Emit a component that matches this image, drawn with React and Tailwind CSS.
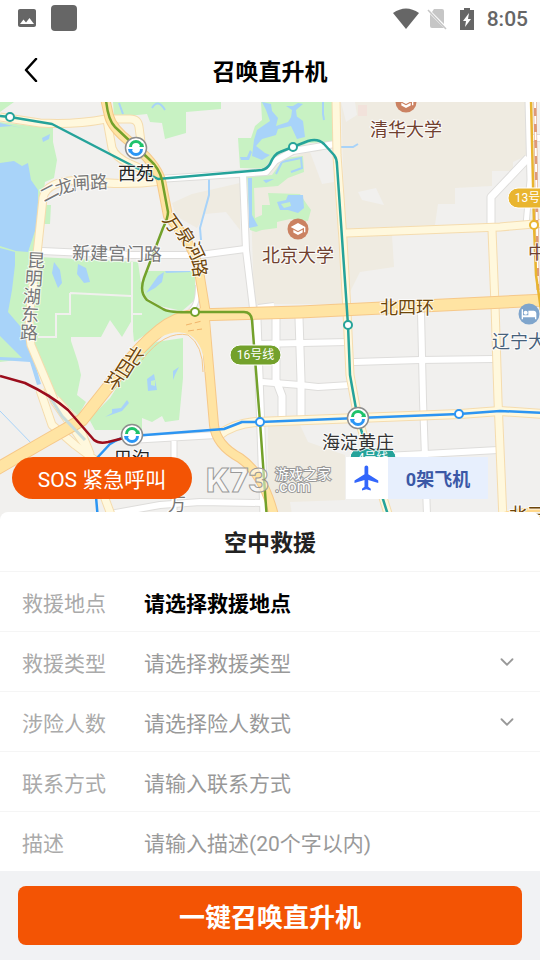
import { ChevronDown } from 'lucide-react';
import { MdImage, MdFlight, MdSchool, MdHotel } from 'react-icons/md';

// Roads are drawn twice: a darker casing first, then the fill on top
const whiteRoads = [
  { d: 'M158 179 L266 172 L275 161 L293 151 L335 144', w: 6 },
  { d: 'M243 175 L246 250 L253 308', w: 6 },
  { d: 'M42 251 L130 255 L200 255 L245 249', w: 6 },
  { d: 'M190 311 Q198 306 198 285', w: 4 },
  { d: 'M276 318 V380 L282 396 V418', w: 7 },
  { d: 'M299 318 L301 380 V418', w: 7 },
  { d: 'M256 344 L348 342', w: 6 },
  { d: 'M258 307 L274 305', w: 4 },
  { d: 'M262 382 L300 385 L318 387 L350 385', w: 6 },
  { d: 'M354 362 L420 360 L494 359', w: 6 },
  { d: 'M421 312 L423 400 L427 515', w: 6 },
  { d: 'M384 456 L425 454 L498 450', w: 6 },
  { d: 'M491 226 V197 L528 158', w: 7 },
  { d: 'M528 100 L530 180 L526 225', w: 5 },
  { d: 'M533 138 H545', w: 6 },
  { d: 'M257 320 L264 515', w: 7 },
  { d: 'M130 440 L216 435', w: 6 },
  { d: 'M174 441 V515', w: 5 },
  { d: 'M110 514 L160 505 L200 502 L262 503', w: 6 },
];

const paleRoads = [
  { d: 'M0 117 L40 123 Q75 125 106 119 L130 119 Q138 119 139 127 L141 142', w: 7 },
  { d: 'M107 120 L112 148 Q115 157 130 164 L160 177', w: 7 },
  { d: 'M162 181 Q120 186 90 181 Q47 178 43 198 L38 245 L30 310 Q28 330 31 345 L55 402 L85 445 L113 520', w: 7 },
  { d: 'M40 390 L52 425 L75 445 L95 460', w: 7 },
  { d: 'M56 400 L78 425 L90 455', w: 8 },
  { d: 'M336 100 L337 155 L343 240 L347 312 L350 375 L358 418 L390 520', w: 7 },
  { d: 'M346 233 L500 227 L545 223', w: 7 },
  { d: 'M492 230 L495 305 L498 400 L503 520', w: 7 },
  { d: 'M218 436 Q232 424 256 422 L358 418 L460 414 L500 411 L545 414', w: 8 },
];

const majorRoads = [
  { d: 'M105 98 L109 116 Q112 128 130 142 Q155 162 161 180 L168 216 Q190 240 198 265 L207 320', w: 8 },
  { d: 'M204 308 L208 355 L214 425 Q216 445 240 458 Q265 475 275 520', w: 8 },
  { d: 'M-5 470 L45 441 L82 420 L120 372 Q140 346 160 330 Q175 318 195 315 L300 312 L545 300', w: 11 },
];

const lines = [
  { d: 'M0 116 L10 117 L52 124 L158 179 L262 170 Q267 169 270 164 Q274 154 280 152 L308 141 Q318 138 324 144 L334 155 Q337 159 337 165 L348 325 L350 375 L358 420 L388 515', c: '#25a39a' },
  { d: 'M106 100 Q108 120 115 127 L150 160 Q159 168 162 180 L168 212 Q168 218 163 228 L144 278 Q139 292 147 300 L163 309 Q168 313 195 312 L244 312 Q251 312 252 320 L260 422 L267 520', c: '#73a12b' },
  { d: 'M98 520 L95 485 L97 458 L110 444 Q118 438 132 436 L224 429 L242 422 L260 422 L358 418 L459 414 L500 411 L545 413', c: '#2c95f2' },
  { d: 'M0 376 L25 383 Q52 396 68 410 L94 440 Q99 444 108 442 L132 436', c: '#9b0d1c' },
  { d: 'M531 100 L534 225 L536 275 L541 310', c: '#e9b52f' },
];

const stops = [
  { x: 10, y: 117, c: '#25a39a' },
  { x: 293, y: 147, c: '#25a39a' },
  { x: 348, y: 325, c: '#25a39a' },
  { x: 195, y: 312, c: '#73a12b' },
  { x: 260, y: 422, c: '#2c95f2' },
  { x: 459, y: 414, c: '#2c95f2' },
  { x: 534, y: 225, c: '#e9b52f' },
];

const interchanges = [
  { x: 136, y: 148 },
  { x: 132, y: 435 },
  { x: 358, y: 418 },
];

const labels = [
  { t: '西苑', x: 136, y: 180, c: '#222' },
  { t: '巴沟', x: 132, y: 465, c: '#222' },
  { t: '海淀黄庄', x: 358, y: 449, c: '#333' },
  { t: '清华大学', x: 406, y: 136, c: '#70402f' },
  { t: '北京大学', x: 298, y: 262, c: '#70402f' },
  { t: '中', x: 537, y: 259, c: '#70402f' },
  { t: '辽宁大', x: 519, y: 348, c: '#46607a' },
  { t: '北四环', x: 407, y: 314, c: '#6d4509' },
  { t: '北三', x: 527, y: 521, c: '#6d4509' },
  { t: '新建宫门路', x: 117, y: 260, c: '#777', r: 1 },
  { t: '闸路', x: 90, y: 189, c: '#777', r: -3 },
  { t: '龙', x: 64, y: 193, c: '#777', r: -20 },
  { t: '二', x: 49, y: 199, c: '#777', r: -28 },
  { t: '昆', x: 36, y: 267, c: '#777', r: 3 },
  { t: '明', x: 34, y: 285, c: '#777', r: 4 },
  { t: '湖', x: 32, y: 303, c: '#777', r: 4 },
  { t: '东', x: 30, y: 321, c: '#777', r: 3 },
  { t: '路', x: 29, y: 339, c: '#777', r: 2 },
  { t: '万', x: 173, y: 230, c: '#6d4509', r: 55 },
  { t: '泉', x: 186, y: 243, c: '#6d4509', r: 58 },
  { t: '河', x: 196, y: 258, c: '#6d4509', r: 65 },
  { t: '路', x: 200, y: 275, c: '#6d4509', r: 82 },
  { t: '北', x: 135, y: 362, c: '#6d4509', r: 32 },
  { t: '四', x: 125, y: 375, c: '#6d4509', r: 32 },
  { t: '环', x: 114, y: 388, c: '#6d4509', r: 32 },
  { t: '万', x: 177, y: 511, c: '#777' },
];

function Roads({ items, edge, fill }) {
  return (
    <g fill="none" strokeLinejoin="round">
      {items.map((r) => (
        <path key={`e${r.d}`} d={r.d} stroke={edge} strokeWidth={r.w + 2} />
      ))}
      {items.map((r) => (
        <path key={r.d} d={r.d} stroke={fill} strokeWidth={r.w} />
      ))}
    </g>
  );
}

function LineBadge({ x, y, w, color, children }) {
  return (
    <g>
      <rect x={x} y={y} width={w} height="20" rx="10" fill={color} stroke="#fff" />
      <text x={x + w / 2} y={y + 14} fill="#fff" fontSize="12" textAnchor="middle">{children}</text>
    </g>
  );
}

function CityMap() {
  return (
    <svg
      className="absolute inset-0 size-full font-['Roboto','Noto_Sans_CJK_SC',sans-serif]"
      viewBox="0 102 540 418"
      preserveAspectRatio="xMidYMin slice"
      role="img"
      aria-label="地图"
    >
      <rect y="90" width="540" height="440" fill="#f1f0ee" />

      {/* Campuses */}
      <g fill="#efebe1">
        <path d="M341 102 H526 V156 L513 162 V171 H492 V186 L455 188 V204 H438 L435 225 L345 229Z" />
        <path d="M250 172 L318 148 L335 160 L342 304 H254Z" />
        <path d="M346 237 L392 235 L394 267 L360 272 L350 292Z" />
        <path d="M172 203 L192 194 L240 183 V230 L226 212 L205 214 L197 228 L176 216Z" />
        <path d="M268 425 H300 L308 442 L345 455 V500 L290 502 L292 515 H268Z" />
      </g>
      <path d="M341 102 H355 L357 115 L346 122Z M310 152 L332 150 L334 182 L322 184Z M358 192 L376 188 L384 205 L362 200Z" fill="#f1f0ee" />
      <path d="M358 105 H367 V116 H358Z" fill="#f2e2db" />

      {/* Parks */}
      <g fill="#c8f2c3">
        <path d="M0 102 H14 L0 112Z M0 122 L40 127 L53 128 V142 L57 160 L54 178 L45 182 L40 225 L34 252 L28 330 L33 358 L0 362Z M46 205 L51 205 L50 224 L43 224Z" />
        <path d="M113 102 H221 V109 L186 112 V133 L165 139 L162 123 L150 122 L147 114 L128 116 L114 117Z" />
        <path d="M261 102 H333 V142 L308 143 L278 156 L266 169 L240 168 L238 138 H251 L255 126 L262 120Z" />
        <path d="M247 177 L272 175 L284 158 L303 156 L304 172 L288 178 L278 186 L254 188 L255 218 L262 215 V205 H270 L268 193 L300 194 L306 203 L311 210 L308 221 L290 219 L277 222 V228 L262 230 L256 232 L250 230Z" />
        <path d="M38 257 L138 262 L143 298 L165 310 L182 311 L134 342 L132 320 L122 337 L110 320 L101 337 L71 337 V341 L78 362 L81 375 L77 395 L86 402 L78 416 L50 388 L32 345Z" />
        <path d="M146 271 H195 V300 L182 311 L160 306 L146 297 L142 285Z" />
        <path d="M136 358 L156 342 L183 338 V378 L179 420 L165 422 L162 416 L152 422 L142 418 V430 L95 430 L89 419 L110 398Z" />
      </g>
      <path d="M70 293 L131 296 M70 293 V314 H56 V337 H38 M132 262 V340 M133 314 H142" fill="none" stroke="#f1f0ee" strokeWidth="2" />

      {/* Water */}
      <g fill="#a8d3f9">
        <path d="M0 163 L14 161 L22 166 L28 163 L31 180 L38 190 V200 L37 225 L31 243 L28 252 L16 251 L0 246Z" />
        <path d="M0 248 L15 252 V265 L12 290 L8 312 L20 326 L28 342 L34 360 L41 384 L37 385 L30 362 L0 360 V357 L22 358 L0 336Z" />
        <path d="M54 262 L60 270 L62 283 L58 288 L52 273Z M78 264 L86 268 L90 282 L84 283 L77 274Z" />
        <path d="M146 293 L158 276 L164 272 L162 282 L155 288Z M165 271 H190 V272 L166 273Z" />
        <path d="M147 379 L154 374 L157 390 L148 391Z M173 371 L179 367 L175 375 L173 380Z M112 409 L121 408 L127 400 L129 403 L122 411 L105 417 L112 413Z" />
        <path d="M42 138 L50 134 L49 139 L43 142Z M0 123 L27 129 L12 126 L0 127Z" />
        <path d="M262 102 L271 104 L272 111 L278 118 L276 126 L288 122 L293 114 L299 118 L303 121 L305 137 L297 139 L291 126 L278 129 L276 135 L262 139 L256 146 L265 153 L270 155 L262 160 L252 156 L254 140 L257 130 L270 121 L266 110Z" />
        <path d="M286 106 H293 L298 103 L303 104 L296 110 L297 118 L291 118 L292 110Z M240 157 H247 L250 150 L252 152 L249 160 H241Z" />
        <path d="M277 202 L286 200 L288 195 L303 195 L304 208 L298 213 L288 210 L280 210Z M248 178 L252 178 V215 L258 226 L249 228Z M263 180 L274 179 L266 183Z" />
      </g>
      <path d="M151 381 L155 380 V386 L151 385Z M281 204 L290 202 L291 206 L284 208Z" fill="#c8f2c3" />
      <g fill="none" stroke="#a8d3f9" strokeWidth="2">
        <path d="M209 178 V195 L200 228 L201 240 M323 102 V114 L324 120 M119 103 L123 114 M341 147 H353 L358 144" />
        <path d="M276 174 L282 162 L301 158 L302 168 L291 172 M152 108 Q158 98 165 110" />
        <path d="M0 411 L34 446" strokeWidth="1" />
      </g>

      <Roads items={whiteRoads} edge="#dedddb" fill="#fff" />
      <Roads items={paleRoads} edge="#f5dcae" fill="#fff8dd" />
      <Roads items={majorRoads} edge="#f6c889" fill="#ffe4a3" />
      <path d="M140 352 Q170 325 190 335 Q205 345 205 372 L212 372 L209 318 L172 318Z" fill="#ffe4a3" />
      <path d="M142 360 Q165 330 188 335 Q203 345 203 372" fill="none" stroke="#f6c889" />
      <path d="M48 394 L62 416 L85 440" fill="none" stroke="#c9dcda" strokeWidth="3" />
      <path d="M186 325 L202 321 M188 331 L202 329" stroke="#f1b46a" strokeDasharray="6 3" />
      <path d="M535 100 L538 290" stroke="#de9a78" strokeWidth="3" />
      <path d="M535 100 L538 290" stroke="#fff" strokeWidth="2" strokeDasharray="8 8" />
      <path d="M500 515 L520 510 H545 M515 520 L545 514" stroke="#ffd88b" strokeWidth="4" fill="none" />

      {/* Metro */}
      {lines.map((l) => (
        <path key={l.d} d={l.d} fill="none" stroke={l.c} strokeWidth="2.5" strokeLinejoin="round" />
      ))}
      {stops.map((s) => (
        <circle key={`${s.x}-${s.y}`} cx={s.x} cy={s.y} r="4" fill="#fff" stroke={s.c} strokeWidth="2" />
      ))}
      <LineBadge x={230} y={345} w={51} color="#73a12b">16号线</LineBadge>
      <LineBadge x={508} y={188} w={51} color="#e9b52f">13号线</LineBadge>
      <LineBadge x={350} y={448} w={46} color="#25a39a">4号线</LineBadge>
      {interchanges.map((s) => (
        <g key={`${s.x}-${s.y}`} transform={`translate(${s.x} ${s.y})`} fill="none">
          <circle r="10.5" fill="#fff" stroke="#8d8d8d" strokeWidth="1.5" />
          <path d="M-5.5 -1 A5.5 5.5 0 0 1 5.5 -1" stroke="#1fc26b" strokeWidth="3" />
          <path d="M-5.5 1 A5.5 5.5 0 0 0 5.5 1" stroke="#2b96f5" strokeWidth="3" />
          <path d="M3 -1 H8 L7 -5Z" fill="#1fc26b" />
          <path d="M-3 1 H-8 L-7 5Z" fill="#2b96f5" />
        </g>
      ))}

      {/* Places */}
      <circle cx="406" cy="102" r="10.5" fill="#cb8262" />
      <MdSchool x="398" y="94" size="16" color="#fff" />
      <circle cx="298" cy="229" r="10.5" fill="#cb8262" />
      <MdSchool x="290" y="221" size="16" color="#fff" />
      <circle cx="529" cy="314" r="10.5" fill="#7fa5cc" />
      <MdHotel x="521" y="306" size="16" color="#fff" />
      {labels.map((l) => (
        <text
          key={`${l.t}${l.x}`}
          x={l.x}
          y={l.y}
          fontSize="18"
          textAnchor="middle"
          fill={l.c}
          stroke="#fff"
          strokeWidth="2"
          strokeOpacity=".8"
          paintOrder="stroke"
          transform={l.r ? `rotate(${l.r} ${l.x} ${l.y - 7})` : undefined}
        >
          {l.t}
        </text>
      ))}

      {/* Watermark */}
      <g fill="#fff" fillOpacity=".5" stroke="#999" fontWeight="800">
        <text x="206" y="492" fontSize="32" fontFamily="Inter, sans-serif">K73</text>
        <g paintOrder="stroke" strokeWidth="2" fillOpacity="1" fontWeight="400">
          <text x="275" y="479" fontSize="14">游戏之家</text>
          <text x="275" y="492" fontSize="16">.com</text>
        </g>
      </g>
    </svg>
  );
}

function StatusBar() {
  return (
    <div className="flex h-9 items-center justify-between pr-3 pl-[15px] text-[#666]">
      <div className="flex items-center gap-3">
        <MdImage className="size-6" />
        <span className="size-[26px] rounded bg-[#666]" />
      </div>
      <div className="flex items-center pt-px">
        <svg className="h-[22px] w-[26px]" viewBox="0 0 26 22" fill="currentColor" aria-hidden="true">
          <path d="M0 5 Q13 -4 26 5 L13 21Z" />
        </svg>
        <svg className="ml-2 h-[22px] w-5" viewBox="0 0 20 22" aria-hidden="true">
          <path d="M7 1 H15 Q17 1 17 3 V16 L5 4Z M3 6 L17 20 H5 Q3 20 3 18Z" fill="#c6c6c6" />
          <path d="M1 2 L19 21" stroke="#c6c6c6" strokeWidth="1.5" />
        </svg>
        <svg className="ml-3 h-[22px] w-4" viewBox="0 0 16 22" aria-hidden="true">
          <path d="M1 2 H5 V0 H11 V2 H15 V22 H1Z" fill="currentColor" />
          <path d="M10 5 L4 13 H7 L6 19 L12 11 H9Z" fill="#fff" />
        </svg>
        <span className="ml-3 text-[21px] leading-6 font-medium">8:05</span>
      </div>
    </div>
  );
}

function Row({ id, label, children }) {
  return (
    <div className="flex h-[60px] items-center border-t border-[#f5f5f5] px-[22px] pt-1">
      <label htmlFor={id} className="w-[122px] shrink-0 text-[21px] leading-8 text-[#aaa]">{label}</label>
      {children}
    </div>
  );
}

function SelectField({ id, placeholder }) {
  return (
    <div className="relative flex flex-1 items-center">
      <select id={id} className="h-10 w-full appearance-none bg-transparent text-[21px] leading-8 text-[#999] outline-none">
        <option>{placeholder}</option>
      </select>
      <ChevronDown className="pointer-events-none absolute right-0 mb-1 size-[22px] text-[#999]" />
    </div>
  );
}

export default function App() {
  return (
    <main className="flex min-h-screen flex-col bg-white font-['Roboto','Noto_Sans_CJK_SC',sans-serif]">
      <StatusBar />

      {/* Header */}
      <header className="grid h-[66px] grid-cols-[64px_1fr_64px] items-center">
        <button type="button" aria-label="返回" className="flex h-full items-center pt-0.5 pl-6">
          <svg className="h-6 w-4" viewBox="0 0 16 24" fill="none" stroke="#000" strokeWidth="2.5" strokeLinecap="round" aria-hidden="true">
            <path d="M12 1 L2 12 L12 23" strokeLinejoin="round" />
          </svg>
        </button>
        <h1 className="pt-2 text-center text-[23px] leading-8 font-bold text-black">召唤直升机</h1>
      </header>

      {/* Map */}
      <section className="relative flex min-h-80 flex-1 items-end justify-between overflow-hidden pr-[52px] pb-[21px] pl-3">
        <CityMap />
        <button type="button" className="relative h-[42px] w-[180px] rounded-full bg-[#f35404] pt-1 text-[21px] leading-8 text-white">
          SOS 紧急呼叫
        </button>
        <div className="relative flex h-[42px] items-center">
          <span className="flex size-[42px] items-center justify-center bg-white">
            <MdFlight className="size-[30px] text-[#3366fb]" />
          </span>
          <span className="flex h-full w-[100px] items-center justify-center bg-[#e7effd] pt-1 text-[18px] leading-8 font-bold text-[#3b58a6]">
            0架飞机
          </span>
        </div>
      </section>

      {/* Rescue form */}
      <form className="relative -mt-2 rounded-t-lg bg-white">
        <h2 className="flex h-[59px] items-center justify-center pt-1 text-[23px] leading-8 font-bold text-[#222]">空中救援</h2>
        <Row id="place" label="救援地点">
          <button id="place" type="button" className="flex-1 text-left text-[21px] leading-8 font-bold text-black">
            请选择救援地点
          </button>
        </Row>
        <Row id="type" label="救援类型">
          <SelectField id="type" placeholder="请选择救援类型" />
        </Row>
        <Row id="people" label="涉险人数">
          <SelectField id="people" placeholder="请选择险人数式" />
        </Row>
        <Row id="contact" label="联系方式">
          <input id="contact" type="tel" placeholder="请输入联系方式" className="h-10 min-w-0 flex-1 text-[21px] outline-none placeholder:text-[#999]" />
        </Row>
        <Row id="desc" label="描述">
          <input id="desc" type="text" maxLength={20} placeholder="请输入描述(20个字以内)" className="h-10 min-w-0 flex-1 text-[21px] outline-none placeholder:text-[#999]" />
        </Row>
        <div className="bg-[#f1f2f4] px-[18px] py-[15px]">
          <button type="submit" className="h-[59px] w-full rounded-lg bg-[#f35404] pt-1 text-[26px] leading-9 font-bold text-white">
            一键召唤直升机
          </button>
        </div>
      </form>
    </main>
  );
}
